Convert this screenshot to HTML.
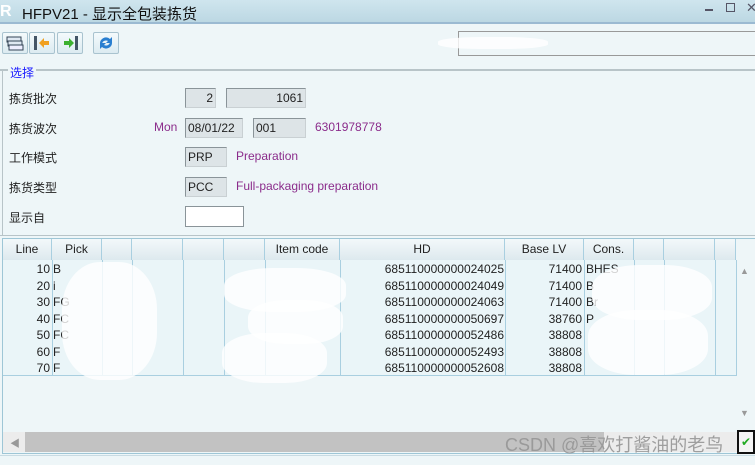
<!DOCTYPE html>
<html><head><meta charset="utf-8"><style>
*{margin:0;padding:0;box-sizing:border-box}
body{width:755px;height:465px;overflow:hidden;background:#eef6f8;font-family:"Liberation Sans","Noto Sans CJK SC",sans-serif;font-size:12px;color:#222;position:relative}
.a{position:absolute}
.title{left:0;top:0;width:755px;height:24px;background:linear-gradient(#cfe5ee,#bcd8e3);border-bottom:2px solid #9bbad2}
.btn{top:32px;width:26px;height:22px;border:1px solid #a9c3cf;background:linear-gradient(#f4fafc,#dcebf1);border-radius:2px}
.lab{left:9px;font-size:12px;color:#222}
.inp{height:20px;border:1px solid #8a9499;border-right-color:#c9d0d3;border-bottom-color:#c9d0d3;background:#dde4e7;font-size:12px;line-height:18px;padding:0 2px;color:#222}
.pur{color:#8b2c8b;font-size:12px}
.hd{top:239px;height:21px;background:linear-gradient(#f3f8fa,#dde9ee);border-right:1px solid #a9cfe0;font-size:12px;text-align:center;line-height:20px;color:#222}
.blob{background:#fff;border-radius:40%;opacity:.8}
.r{position:relative;height:16.5px}
.n{position:absolute;left:3px;width:47px;text-align:right}
</style></head><body>
<div class="a title"></div>
<div class="a" style="left:0;top:3px;font-weight:bold;font-size:16px;color:#fff">R</div>
<div class="a" style="left:22px;top:3px;font-size:15px;color:#111">HFPV21 - 显示全包装拣货</div>
<div class="a" style="left:705px;top:9px;width:8px;height:2px;background:#556"></div>
<div class="a" style="left:726px;top:3px;width:9px;height:9px;border:1.5px solid #556"></div>
<div class="a" style="left:746px;top:0px;font-size:13px;color:#556">✕</div>

<div class="a btn" style="left:2px"><svg width="24" height="20"><rect x="4" y="4" width="14" height="5" fill="#dfe8f2" stroke="#345"/><rect x="5" y="8" width="14" height="5" fill="#dfe8f2" stroke="#345"/><rect x="6" y="12" width="14" height="5" fill="#eef" stroke="#345"/></svg></div>
<div class="a btn" style="left:29px"><svg width="24" height="20"><rect x="4" y="3" width="3" height="14" fill="#456"/><path d="M9 10l5-5v3h5v4h-5v3z" fill="#f0a020"/></svg></div>
<div class="a btn" style="left:57px"><svg width="24" height="20"><rect x="17" y="3" width="3" height="14" fill="#456"/><path d="M16 10l-5-5v3h-5v4h5v3z" fill="#3cb030"/></svg></div>
<div class="a btn" style="left:93px"><svg width="24" height="20"><path d="M6 11a6 6 0 0 1 10-5l2-2v6h-6l2-2a4 4 0 0 0-6 3z" fill="#2a7fd0"/><path d="M18 9a6 6 0 0 1-10 5l-2 2v-6h6l-2 2a4 4 0 0 0 6-3z" fill="#2a7fd0"/></svg></div>
<div class="a" style="left:458px;top:31px;width:297px;height:25px;border:1px solid #999;border-right:none"></div>
<div class="a blob" style="left:438px;top:37px;width:110px;height:12px"></div>

<div class="a" style="left:0;top:69px;width:755px;height:2px;background:#b8c4c8"></div>
<div class="a" style="left:2px;top:70px;width:1px;height:165px;background:#b8c4c8"></div>
<div class="a" style="left:0;top:235px;width:755px;height:1px;background:#b8c4c8"></div>
<div class="a" style="left:8px;top:64px;background:#eef6f8;padding:0 2px;color:#1a1aff;font-size:12px">选择</div>

<div class="a lab" style="top:90px">拣货批次</div>
<div class="a inp" style="left:185px;top:88px;width:31px;text-align:right">2</div>
<div class="a inp" style="left:226px;top:88px;width:80px;text-align:right">1061</div>
<div class="a lab" style="top:120px">拣货波次</div>
<div class="a pur" style="left:154px;top:120px">Mon</div>
<div class="a inp" style="left:185px;top:118px;width:58px">08/01/22</div>
<div class="a inp" style="left:253px;top:118px;width:53px">001</div>
<div class="a pur" style="left:315px;top:120px">6301978778</div>
<div class="a lab" style="top:149px">工作模式</div>
<div class="a inp" style="left:185px;top:147px;width:42px">PRP</div>
<div class="a pur" style="left:236px;top:149px">Preparation</div>
<div class="a lab" style="top:179px">拣货类型</div>
<div class="a inp" style="left:185px;top:177px;width:42px">PCC</div>
<div class="a pur" style="left:236px;top:179px">Full-packaging preparation</div>
<div class="a lab" style="top:209px">显示自</div>
<div class="a" style="left:185px;top:206px;width:59px;height:21px;border:1px solid #8a9499;background:#fff"></div>

<div class="a" style="left:2px;top:238px;width:753px;height:216px;border:1px solid #9ec6d6;border-right:none;background:#eef6f8"></div>
<div class="a hd" style="left:3px;width:49px">Line</div>
<div class="a hd" style="left:52px;width:50px">Pick</div>
<div class="a hd" style="left:102px;width:30px"></div>
<div class="a hd" style="left:132px;width:51px"></div>
<div class="a hd" style="left:183px;width:41px"></div>
<div class="a hd" style="left:224px;width:41px"></div>
<div class="a hd" style="left:265px;width:75px">Item code</div>
<div class="a hd" style="left:340px;width:165px">HD</div>
<div class="a hd" style="left:505px;width:79px">Base LV</div>
<div class="a hd" style="left:584px;width:50px">Cons.</div>
<div class="a hd" style="left:634px;width:30px"></div>
<div class="a hd" style="left:664px;width:51px"></div>
<div class="a hd" style="left:715px;width:21px"></div>
<div class="a" style="left:3px;top:260px;width:733px;height:116px;background:#eaf5f8;border-bottom:1px solid #a9cfe0"></div>
<svg class="a" style="left:0;top:260px" width="740" height="116"><g stroke="#a9cfe0"><line x1="52.5" y1="0" x2="52.5" y2="116"/><line x1="102.5" y1="0" x2="102.5" y2="116"/><line x1="132.5" y1="0" x2="132.5" y2="116"/><line x1="183.5" y1="0" x2="183.5" y2="116"/><line x1="224.5" y1="0" x2="224.5" y2="116"/><line x1="265.5" y1="0" x2="265.5" y2="116"/><line x1="340.5" y1="0" x2="340.5" y2="116"/><line x1="505.5" y1="0" x2="505.5" y2="116"/><line x1="584.5" y1="0" x2="584.5" y2="116"/><line x1="634.5" y1="0" x2="634.5" y2="116"/><line x1="664.5" y1="0" x2="664.5" y2="116"/><line x1="715.5" y1="0" x2="715.5" y2="116"/><line x1="736.5" y1="0" x2="736.5" y2="116"/></g></svg>
<div class="a" style="left:0;top:261px;font-size:12px;line-height:16.5px;width:600px">
<div class="r"><span class="n">10</span><span class="a" style="left:53px">B</span><span class="a" style="left:344px;width:160px;text-align:right">685110000000024025</span><span class="a" style="left:508px;width:74px;text-align:right">71400</span><span class="a" style="left:586px">BHES</span></div>
<div class="r"><span class="n">20</span><span class="a" style="left:53px">i</span><span class="a" style="left:344px;width:160px;text-align:right">685110000000024049</span><span class="a" style="left:508px;width:74px;text-align:right">71400</span><span class="a" style="left:586px">B</span></div>
<div class="r"><span class="n">30</span><span class="a" style="left:53px">FG</span><span class="a" style="left:344px;width:160px;text-align:right">685110000000024063</span><span class="a" style="left:508px;width:74px;text-align:right">71400</span><span class="a" style="left:586px">Br</span></div>
<div class="r"><span class="n">40</span><span class="a" style="left:53px">FC</span><span class="a" style="left:344px;width:160px;text-align:right">685110000000050697</span><span class="a" style="left:508px;width:74px;text-align:right">38760</span><span class="a" style="left:586px">P</span></div>
<div class="r"><span class="n">50</span><span class="a" style="left:53px">FC</span><span class="a" style="left:344px;width:160px;text-align:right">685110000000052486</span><span class="a" style="left:508px;width:74px;text-align:right">38808</span></div>
<div class="r"><span class="n">60</span><span class="a" style="left:53px">F</span><span class="a" style="left:344px;width:160px;text-align:right">685110000000052493</span><span class="a" style="left:508px;width:74px;text-align:right">38808</span></div>
<div class="r"><span class="n">70</span><span class="a" style="left:53px">F</span><span class="a" style="left:344px;width:160px;text-align:right">685110000000052608</span><span class="a" style="left:508px;width:74px;text-align:right">38808</span></div>
</div>
<div class="a blob" style="left:62px;top:262px;width:95px;height:118px"></div>
<div class="a blob" style="left:224px;top:268px;width:122px;height:44px"></div>
<div class="a blob" style="left:248px;top:300px;width:95px;height:44px"></div>
<div class="a blob" style="left:222px;top:333px;width:105px;height:50px"></div>
<div class="a blob" style="left:592px;top:265px;width:120px;height:55px"></div>
<div class="a blob" style="left:588px;top:310px;width:120px;height:65px"></div>

<div class="a" style="left:740px;top:266px;font-size:9px;color:#999">▲</div>
<div class="a" style="left:740px;top:408px;font-size:9px;color:#999">▼</div>
<div class="a" style="left:3px;top:432px;width:734px;height:20px;background:#ececec"></div>
<div class="a" style="left:10px;top:435px;font-size:10px;color:#999">◀</div>
<div class="a" style="left:25px;top:432px;width:579px;height:20px;background:#c2c2c2"></div>
<div class="a" style="left:505px;top:431px;font-size:18px;color:rgba(150,150,150,.9);white-space:nowrap">CSDN @喜欢打酱油的老鸟</div>
<div class="a" style="left:737px;top:430px;width:18px;height:24px;border:2px solid #111;background:#f4f4f4;color:#2a2;font-size:12px;text-align:center;line-height:20px">✔</div>
<div class="a" style="left:0;top:455px;width:755px;height:1px;background:#c8dbe3"></div>
</body></html>
